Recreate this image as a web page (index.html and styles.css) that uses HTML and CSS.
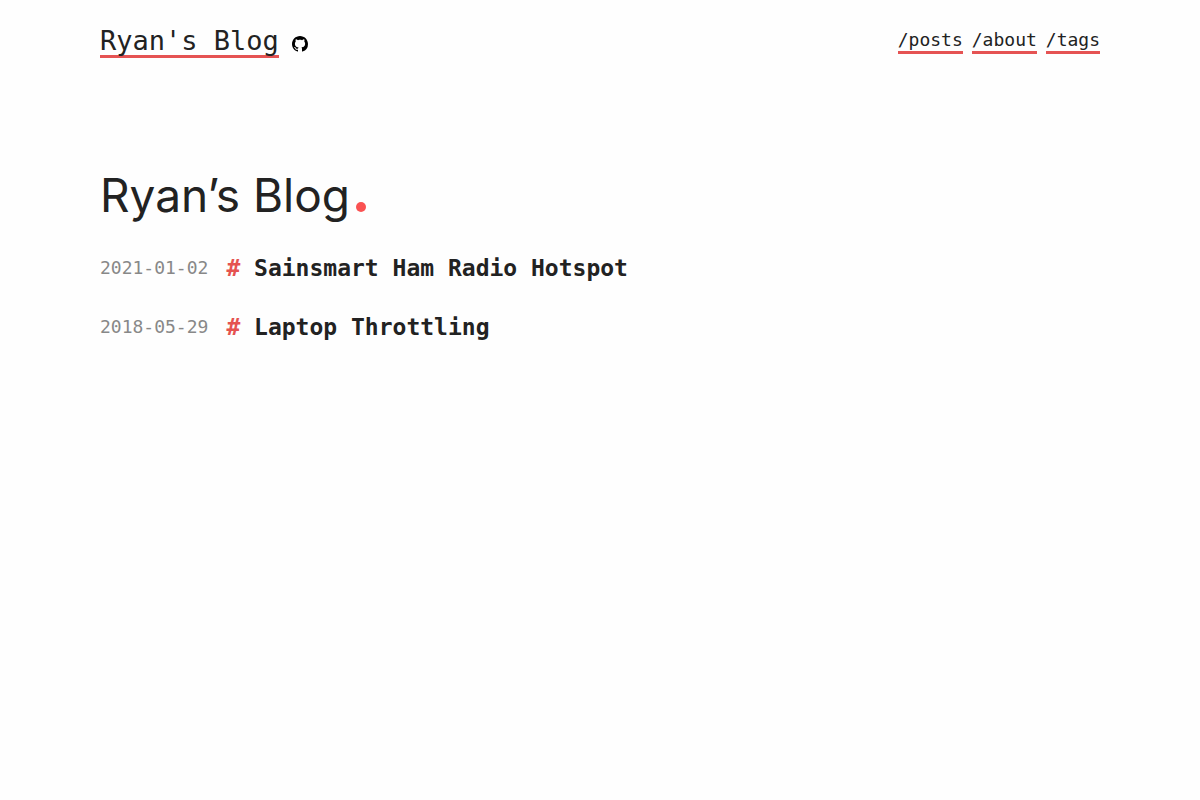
FILE: index.html
```html
<!DOCTYPE html>
<html lang="en">
<head>
  <meta charset="utf-8">
  <meta name="viewport" content="width=device-width, initial-scale=1.0">
  <title>Ryan's Blog</title>
  <link rel="stylesheet" href="styles.css">
</head>
<body>
  <div class="content">
    <header class="header">
      <div class="brand">
        <a class="site-title" href="/">Ryan's Blog</a>
        <a class="social" href="https://github.com/" aria-label="GitHub">
          <svg width="16" height="16" viewBox="0 0 16 16" aria-hidden="true">
            <path d="M8 0C3.58 0 0 3.58 0 8c0 3.54 2.29 6.53 5.47 7.59.4.07.55-.17.55-.38 0-.19-.01-.82-.01-1.49-2.01.37-2.53-.49-2.69-.94-.09-.23-.48-.94-.82-1.13-.28-.15-.68-.52-.01-.53.63-.01 1.08.58 1.23.82.72 1.21 1.87.87 2.33.66.07-.52.28-.87.51-1.07-1.78-.2-3.64-.89-3.64-3.95 0-.87.31-1.59.82-2.15-.08-.2-.36-1.02.08-2.12 0 0 .67-.21 2.2.82.64-.18 1.32-.27 2-.27s1.36.09 2 .27c1.53-1.04 2.2-.82 2.2-.82.44 1.1.16 1.92.08 2.12.51.56.82 1.27.82 2.15 0 3.07-1.87 3.75-3.65 3.95.29.25.54.73.54 1.48 0 1.07-.01 1.93-.01 2.2 0 .21.15.46.55.38A8.01 8.01 0 0 0 16 8c0-4.42-3.58-8-8-8z"/>
          </svg>
        </a>
      </div>
      <nav class="nav">
        <a href="/posts">/posts</a>
        <a href="/about">/about</a>
        <a href="/tags">/tags</a>
      </nav>
    </header>

    <main>
      <h1>Ryan’s Blog<span class="dot"></span></h1>
      <ul class="posts">
        <li>
          <time datetime="2021-01-02">2021-01-02</time>
          <a href="/posts/sainsmart-ham-radio-hotspot"><span class="hash">#</span> Sainsmart Ham Radio Hotspot</a>
        </li>
        <li>
          <time datetime="2018-05-29">2018-05-29</time>
          <a href="/posts/laptop-throttling"><span class="hash">#</span> Laptop Throttling</a>
        </li>
      </ul>
    </main>
  </div>
</body>
</html>
```
FILE: styles.css
```css
body {
  margin: 0;
  background: #fefefe;
  color: #222;
  font-family: "DejaVu Sans Mono", monospace;
  font-size: 18px;
}

a {
  color: inherit;
  text-decoration: none;
}

.content {
  max-width: 1000px;
  margin: 0 auto;
  padding: 24px 20px;
}

.header {
  display: flex;
  flex-wrap: wrap;
  justify-content: space-between;
  align-items: flex-start;
  margin-bottom: 107px;
}

.brand {
  display: flex;
  align-items: center;
  gap: 13px;
}

.site-title {
  padding-top: 2px;
  font-size: 27px;
  line-height: 29px;
  border-bottom: 3px solid #e55353;
}

.social {
  display: flex;
  padding-top: 6px;
}

.nav {
  display: flex;
  gap: 9px;
  padding-top: 4px;
}

.nav a {
  line-height: 23px;
  border-bottom: 3px solid #e55353;
}

h1 {
  margin: 0 0 27px;
  font-family: Inter, sans-serif;
  font-size: 46px;
  font-weight: 400;
  line-height: 60px;
}

.dot {
  display: inline-block;
  width: 10px;
  height: 10px;
  margin-left: 6px;
  border-radius: 50%;
  background: #fa5252;
}

.posts {
  display: flex;
  flex-direction: column;
  gap: 27px;
  margin: 0;
  padding: 0;
  list-style: none;
}

.posts li {
  display: flex;
  align-items: center;
  gap: 18px;
  line-height: 32px;
}

.posts time {
  color: #888;
  white-space: nowrap;
}

.posts a {
  font-size: 23px;
  font-weight: 700;
}

.hash {
  color: #e55350;
}
```
